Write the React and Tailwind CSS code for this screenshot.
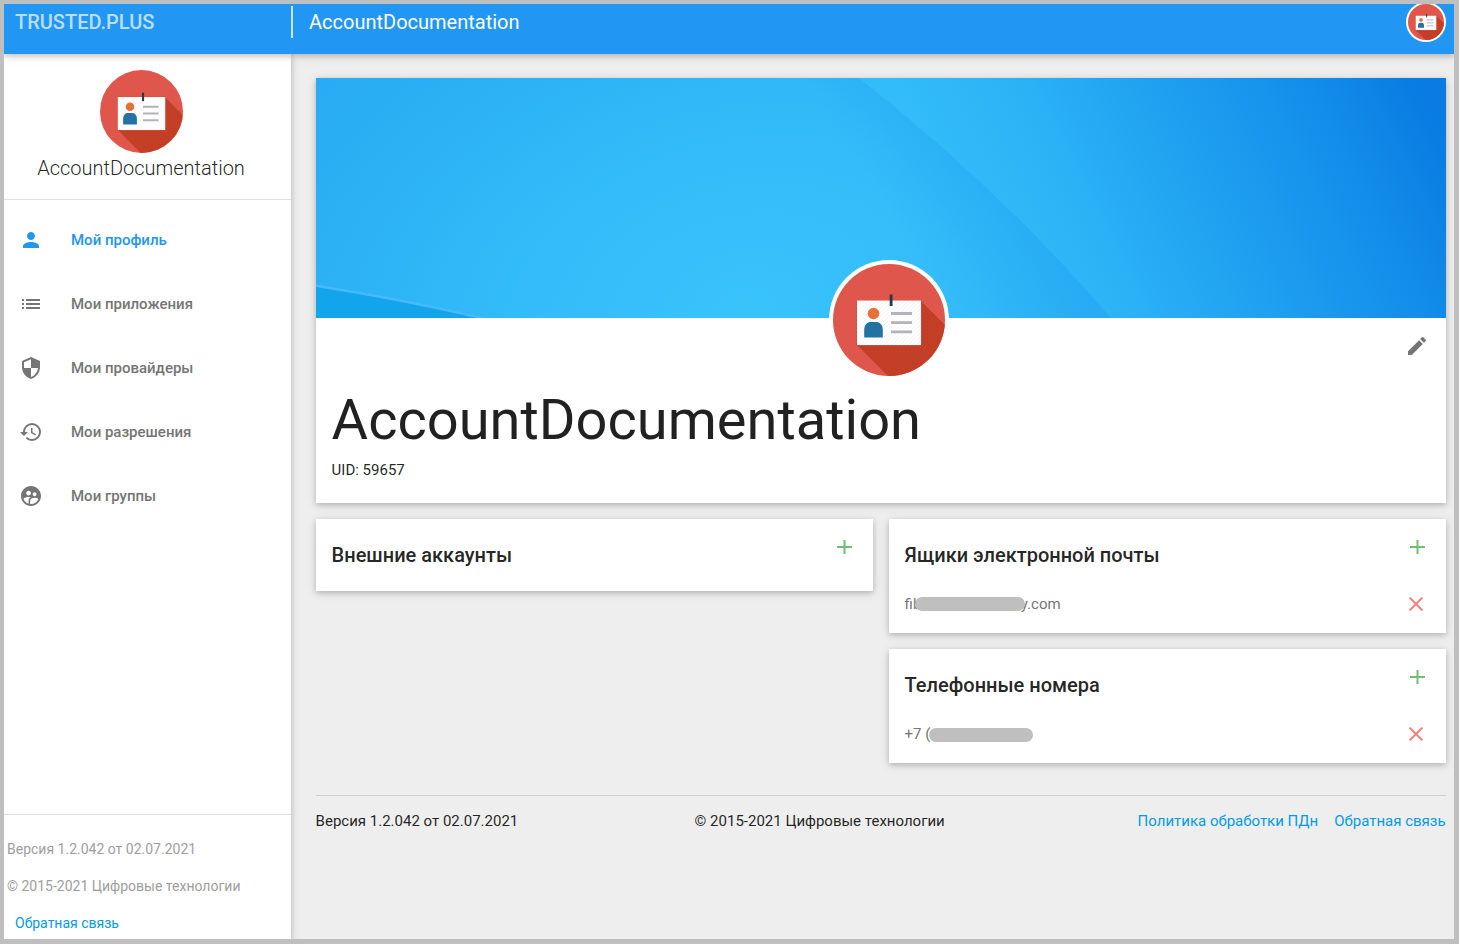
import React from "react";
import {
  MdPerson,
  MdList,
  MdSecurity,
  MdHistory,
  MdSupervisedUserCircle,
  MdEdit,
} from "react-icons/md";

const CARD =
  "bg-white shadow-[0_2px_5px_0_rgba(0,0,0,0.16),0_2px_10px_0_rgba(0,0,0,0.12)]";

function Badge({ id, className }) {
  return (
    <svg viewBox="0 0 112 112" className={className}>
      <defs>
        <clipPath id={id}>
          <circle cx="56" cy="56" r="56" />
        </clipPath>
        <pattern id={id + "-lines"} width="4" height="4" patternUnits="userSpaceOnUse">
          <path d="M-1 1L1 -1M0 4L4 0M3 5L5 3" stroke="#000" strokeOpacity="0.045" strokeWidth="0.9" />
        </pattern>
      </defs>
      <g clipPath={"url(#" + id + ")"}>
        <rect width="112" height="112" fill="#e1574c" />
        <path d="M88 37L124 73V124H67L24 81Z" fill="#c53f27" />
        <rect x="23.5" y="36" width="65" height="46" fill="#d04c3c" />
        <rect x="24" y="36.5" width="64" height="44.5" fill="#fff" />
        <rect width="112" height="112" fill={"url(#" + id + "-lines)"} />
        <rect x="56.7" y="30.5" width="2.8" height="11.5" fill="#23394d" />
        <circle cx="40.5" cy="49.5" r="5.8" fill="#ea7039" />
        <path d="M31.2 73.5V66C31.2 60.5 34.5 58 38 58H43C46.500 58 49.800 60.500 49.800 66V73.500Z" fill="#2472a4" />
        <path d="M58 49.500H79M58 58.700H79M58 67.800H79" stroke="#b3b3ba" strokeWidth="2.800" />
      </g>
    </svg>
  );
}

function Banner() {
  return (
    <svg viewBox="0 0 1130 240" className="block h-[240px] w-full" preserveAspectRatio="none">
      <defs>
        <radialGradient id="glow" gradientUnits="userSpaceOnUse" cx="0" cy="0" r="1" gradientTransform="translate(430 230) rotate(-12) scale(620 430)">
          <stop offset="0" stopColor="#39c3fb" />
          <stop offset="0.4" stopColor="#32bbf9" />
          <stop offset="0.75" stopColor="#2bb0f4" />
          <stop offset="1" stopColor="#28aaf2" />
        </radialGradient>
        <linearGradient id="edge" gradientUnits="userSpaceOnUse" x1="590" y1="160" x2="700" y2="90">
          <stop offset="0" stopColor="#22a4f0" stopOpacity="0" />
          <stop offset="1" stopColor="#22a4f0" stopOpacity="0.65" />
        </linearGradient>
        <linearGradient id="deep" gradientUnits="userSpaceOnUse" x1="660" y1="170" x2="1080" y2="-40">
          <stop offset="0" stopColor="#32bcf9" />
          <stop offset="0.22" stopColor="#2cb3f6" />
          <stop offset="0.5" stopColor="#1fa0f0" />
          <stop offset="0.8" stopColor="#128dea" />
          <stop offset="1" stopColor="#097be2" />
        </linearGradient>
      </defs>
      <rect width="1130" height="240" fill="url(#glow)" />
      <rect width="800" height="240" fill="url(#edge)" />
      <path d="M543 0Q685 112 795 240H1130V0Z" fill="url(#deep)" />
      <path d="M0 208Q90 222 172 242H0Z" fill="#12a5ec" />
      <path d="M-2 207.500Q90 222 174 242" fill="none" stroke="#45baff" strokeWidth="2.500" />
    </svg>
  );
}

function PlusIcon() {
  return (
    <svg viewBox="0 0 15 14" className="h-[14px] w-[15px]">
      <path d="M0 7H15M7.500 0V14" stroke="#72bd75" strokeWidth="2" fill="none" />
    </svg>
  );
}

function CrossIcon() {
  return (
    <svg viewBox="0 0 14 14" className="h-[14px] w-[14px]">
      <path d="M0.600 0.600L13.400 13.400M13.400 0.600L0.600 13.400" stroke="#fa7670" strokeWidth="1.900" fill="none" />
    </svg>
  );
}

const MENU = [
  { label: "Мой профиль", Icon: MdPerson, active: true },
  { label: "Мои приложения", Icon: MdList },
  { label: "Мои провайдеры", Icon: MdSecurity },
  { label: "Мои разрешения", Icon: MdHistory },
  { label: "Мои группы", Icon: MdSupervisedUserCircle },
];

function Header() {
  return (
    <header className="relative z-20 flex h-[50px] shrink-0 items-start bg-[#2196f3] text-[20px] text-white shadow-[0_2px_5px_0_rgba(0,0,0,0.16),0_2px_10px_0_rgba(0,0,0,0.12)]">
      <div className="w-[287px] pl-[11px] font-medium leading-[36px] text-white/70">TRUSTED.PLUS</div>
      <div className="mt-[2px] h-[32px] w-[2px] bg-white/75" />
      <div className="flex-1 pl-[16px] leading-[36px]">AccountDocumentation</div>
      <div className="mr-[8px] -mt-[2px] h-[40px] w-[40px] rounded-full bg-white p-[2px]">
        <Badge id="badge-nav" className="h-[36px] w-[36px]" />
      </div>
    </header>
  );
}

function Sidebar() {
  return (
    <aside className="relative z-10 flex w-[287px] shrink-0 flex-col bg-white shadow-[0_2px_5px_0_rgba(0,0,0,0.16),0_2px_10px_0_rgba(0,0,0,0.12)]">
      <div className="flex h-[146px] flex-col items-center border-b border-[#e0e0e0] pr-[13px] pt-[16px]">
        <Badge id="badge-side" className="h-[83px] w-[83px] shrink-0" />
        <div className="whitespace-nowrap text-[20px] font-light leading-[30px] text-black/87">
          AccountDocumentation
        </div>
      </div>
      <nav className="flex flex-col pt-[8px]">
        {MENU.map(({ label, Icon, active }) => (
          <a
            key={label}
            className={
              "flex h-[64px] items-center pl-[15px] text-[15px] font-medium " +
              (active ? "text-[#2196f3]" : "text-[#757575]")
            }
          >
            <Icon className="mr-[28px] h-[24px] w-[24px]" />
            {label}
          </a>
        ))}
      </nav>
      <div className="mt-auto flex h-[125px] flex-col border-t border-[#e0e0e0] pt-[16px] text-[14px] leading-[37px] text-[#9e9e9e]">
        <div className="pl-[3px]">Версия 1.2.042 от 02.07.2021</div>
        <div className="pl-[3px]">© 2015-2021 Цифровые технологии</div>
        <a className="pl-[11px] text-[#039be5]">Обратная связь</a>
      </div>
    </aside>
  );
}

function CardHead({ title }) {
  return (
    <div className="flex h-[72px] items-start justify-between pl-[16px] pr-[20.600px]">
      <h2 className="text-[20px] font-medium leading-[72px]">{title}</h2>
      <div className="mt-[21px]">
        <PlusIcon />
      </div>
    </div>
  );
}

function ContactCard({ title, children }) {
  return (
    <section className={"h-[114px] " + CARD}>
      <CardHead title={title} />
      <div className="flex h-[26px] items-center justify-between pl-[16px] pr-[22.600px] text-[15px] text-[#757575]">
        <div className="flex items-center">{children}</div>
        <CrossIcon />
      </div>
    </section>
  );
}

export default function App() {
  return (
    <div
      className="h-[944px] w-[1459px] overflow-hidden border-4 border-b-[5px] border-r-[5px] border-[#bfbfbf] text-[rgba(0,0,0,0.87)]"
      style={{ fontFamily: 'Roboto, "Liberation Sans", sans-serif' }}
    >
      <div className="flex h-full flex-col overflow-hidden bg-[#eeeeee]">
        <Header />
        <div className="flex flex-1">
          <Sidebar />
          <main className="flex flex-1 flex-col pl-[24.600px] pr-[8.400px] pt-[24px]">
            <section className={"h-[425px] " + CARD}>
              <div className="relative">
                <Banner />
                <div className="absolute left-[513.400px] top-[182px] h-[120px] w-[120px] rounded-full bg-white p-[4px]">
                  <Badge id="badge-main" className="h-[112px] w-[112px]" />
                </div>
              </div>
              <div className="flex justify-end pr-[16.200px] pt-[16px] text-[#757575]">
                <MdEdit className="h-[24px] w-[24px]" />
              </div>
              <h1 className="pl-[16px] pt-[25px] text-[56px] leading-[74px]">AccountDocumentation</h1>
              <p className="pl-[16px] text-[15px] leading-[26px]">UID: 59657</p>
            </section>
            <div className="mt-[16px] flex items-start gap-4">
              <section className={"flex-1 " + CARD}>
                <CardHead title="Внешние аккаунты" />
              </section>
              <div className="flex flex-1 flex-col gap-4">
                <ContactCard title="Ящики электронной почты">
                  <span>fib</span>
                  <span className="relative z-10 -ml-[6.600px] h-[14px] w-[110px] rounded-full bg-[#bfbfbf]" />
                  <span className="-ml-[4px]">y.com</span>
                </ContactCard>
                <ContactCard title="Телефонные номера">
                  <span>+7 (</span>
                  <span className="relative z-10 -ml-[1px] mt-[1px] h-[14px] w-[104px] rounded-full bg-[#bfbfbf]" />
                </ContactCard>
              </div>
            </div>
            <footer className="mt-[32px] flex justify-between border-t border-[#d0d0d0] text-[15px] leading-[50px]">
              <div className="w-[379px]">Версия 1.2.042 от 02.07.2021</div>
              <div className="flex-1">© 2015-2021 Цифровые технологии</div>
              <div className="flex gap-4 text-[#039be5]">
                <a>Политика обработки ПДн</a>
                <a>Обратная связь</a>
              </div>
            </footer>
          </main>
        </div>
      </div>
    </div>
  );
}
